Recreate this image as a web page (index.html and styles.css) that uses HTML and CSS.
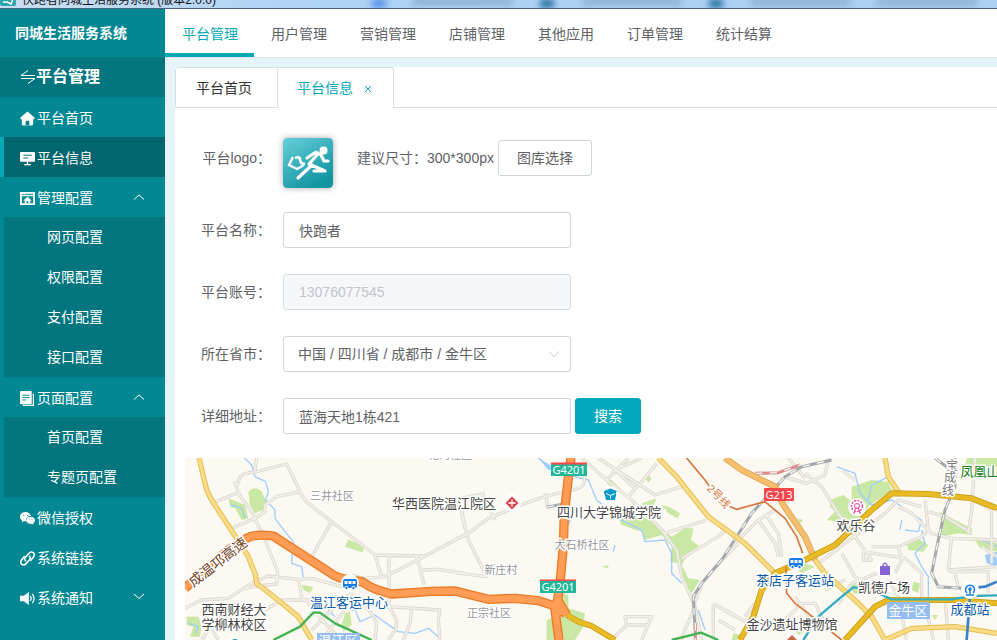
FILE: index.html
```html
<!DOCTYPE html>
<html lang="zh-CN">
<head>
<meta charset="utf-8">
<meta name="viewport" content="width=device-width, initial-scale=1">
<title>同城生活服务系统</title>
<link rel="stylesheet" href="styles.css">
</head>
<body>
<div class="window">
  <header class="titlebar">
    <svg class="titlebar-icon" viewBox="0 0 16 16"><rect width="16" height="16" rx="2" fill="#2aa5ae"/><path d="M3 12h4l4 2 2-5" fill="none" stroke="#fff" stroke-width="1.5"/></svg>
    <span class="titlebar-text">快跑者同城生活服务系统 (版本2.0.0)</span>
    <span class="smudges"><i class="smudge blue"></i><i class="smudge wide"></i><i class="smudge dark"></i><i class="smudge wide"></i><i class="smudge dark"></i><i class="smudge wide"></i><i class="smudge wide"></i></span>
  </header>
  <div class="app">
    <aside class="sidebar">
      <h1 class="brand">同城生活服务系统</h1>
      <h2 class="section"><svg class="swap" viewBox="0 0 16 16"><path d="M1 6.500h14M1 6.500L8 1.500M15 9.500H1M15 9.500L8 14.500"/></svg>平台管理</h2>
      <nav class="menu">
        <a class="item" href="#"><svg class="ico" viewBox="0 0 16 16"><path fill="#fff" d="M8 .5L.5 7Q0 9 2 9v4.500Q2 15.500 4 15.500h8q2 0 2-2V9q2 0 1.500-2z"/><path fill="#038792" d="M6 15.500v-4q0-1 1-1h2q1 0 1 1v4z"/></svg>平台首页</a>
        <a class="item active" href="#"><svg class="ico" viewBox="0 0 16 16"><rect x="0" y="1" width="16" height="10.500" rx="1" fill="#fff"/><path d="M3.500 4.500h9M3.500 7.500h5" stroke="#016a70"/><path d="M8 11v3M4.500 14.500h7" stroke="#fff" stroke-width="1.500"/></svg>平台信息</a>
        <a class="item" href="#"><svg class="ico" viewBox="0 0 16 16"><path fill="#fff" fill-rule="evenodd" d="M0 1h16v14H0zM2 5.500v7.500h12V5.500zM2 3v1h2V3zM5 3v1h9V3z"/><path fill="#fff" d="M8 6L3.500 10H5v3h2v-2h2v2h2v-3h1.500z"/></svg>管理配置<svg class="chev" viewBox="0 0 12 12"><path d="M1 7.500l5-4.500 5 4.500"/></svg></a>
        <div class="submenu"><a href="#">网页配置</a><a href="#">权限配置</a><a href="#">支付配置</a><a href="#">接口配置</a></div>
        <a class="item" href="#"><svg class="ico" viewBox="0 0 16 16"><rect x="0" y="0" width="12.500" height="14" rx="1" fill="#fff"/><path d="M2.500 4.500h7.500M2.500 7h7.500M2.500 9.500h4" stroke="#038792"/><path d="M14.300 3v12.300H3" fill="none" stroke="#fff" stroke-width="1.300"/></svg>页面配置<svg class="chev" viewBox="0 0 12 12"><path d="M1 7.500l5-4.500 5 4.500"/></svg></a>
        <div class="submenu"><a href="#">首页配置</a><a href="#">专题页配置</a></div>
        <a class="item" href="#"><svg class="ico" viewBox="0 0 16 16"><path fill="#fff" d="M6 1C2.600 1 0 3.300 0 6c0 1.700.8 3 2.200 4L1.700 12l2.300-1.200 2.300.2C6 7.500 8.500 5.300 11.800 5.400 11 2.800 8.700 1 6 1z"/><path fill="#fff" d="M11.300 6c-2.700 0-4.700 1.700-4.700 3.900s2 3.900 4.700 3.900l1.500-.2 1.800 1-.4-1.700c1.100-.7 1.800-1.800 1.800-3 0-2.100-2-3.900-4.700-3.900z"/><g fill="#038792"><circle cx="4" cy="4.800" r=".6"/><circle cx="7.800" cy="4.800" r=".6"/><circle cx="9.800" cy="8.800" r=".5"/><circle cx="12.700" cy="8.800" r=".5"/></g></svg>微信授权</a>
        <a class="item" href="#"><svg class="ico" viewBox="0 0 16 16"><g fill="none" stroke="#fff" stroke-width="1.700" stroke-linecap="round"><path d="M6 10.500c-1.300-1-1.300-2.300-.3-3.600L9.500 2.500c3-3.200 7.500 0 5 3.700L11.500 10"/><path d="M10 5.500c1.300 1 1.300 2.300.3 3.600l-3.800 4.400c-3 3.200-7.500 0-5-3.700L4.500 6"/></g></svg>系统链接</a>
        <a class="item" href="#"><svg class="ico" viewBox="0 0 16 16"><path fill="#fff" d="M0 5h4L9.500 1v14L4 11H0z"/><path d="M11 5.500q2 2.500 0 5M13 3q4 5 0 10" fill="none" stroke="#fff" stroke-width="1.300"/></svg>系统通知<svg class="chev" viewBox="0 0 12 12"><path d="M1 2l5 4.500L11 2"/></svg></a>
      </nav>
    </aside>
    <main class="main">
      <nav class="topnav"><a class="current" href="#">平台管理</a><a href="#">用户管理</a><a href="#">营销管理</a><a href="#">店铺管理</a><a href="#">其他应用</a><a href="#">订单管理</a><a href="#">统计结算</a></nav>
      <div class="panel">
        <div class="tabs"><a class="tab" href="#">平台首页</a><a class="tab on" href="#">平台信息<svg class="close" viewBox="0 0 8 8"><path d="M1 1l6 6M7 1L1 7"/></svg></a><span class="rest"></span></div>
        <form class="form">
          <div class="row logo-row"><span class="label">平台logo：</span>
            <svg class="logo" viewBox="0 0 50 50"><defs><linearGradient id="lg" x2=".6" y2="1"><stop stop-color="#65cfdb"/><stop offset="1" stop-color="#1394a1"/></linearGradient></defs><rect width="50" height="50" rx="4" fill="url(#lg)"/><g fill="none" stroke="#fff"><circle cx="40.500" cy="12.500" r="4" fill="#fff" stroke="none"/><path stroke-width="3.200" stroke-linecap="round" stroke-linejoin="round" d="M24 20l9-6 5 3 3 6h4M34 17l-8 9 16 7H31M29 27L15 40"/><path stroke-width="2.400" d="M18 21l-3-2-3 1M10 19l-4 8 8 4 7-4M16 19l2 6 4 1"/></g></svg>
            <span class="hint">建议尺寸：300*300px</span><button class="btn" type="button">图库选择</button></div>
          <div class="row"><label class="label" for="name">平台名称：</label><input class="field" id="name" type="text" value="快跑者"></div>
          <div class="row"><label class="label" for="account">平台账号：</label><input class="field" id="account" type="text" value="13076077545" disabled></div>
          <div class="row"><label class="label" for="region">所在省市：</label><span class="select"><select class="field" id="region"><option>中国 / 四川省 / 成都市 / 金牛区</option></select><svg class="arrow" viewBox="0 0 12 12"><path d="M1 3.500l5 5 5-5"/></svg></span></div>
          <div class="row"><label class="label" for="address">详细地址：</label><input class="field" id="address" type="text" value="蓝海天地1栋421"><button class="btn primary" type="button">搜索</button></div>
        </form>
        <div class="map">
<svg class="map-canvas" role="img" aria-label="地图">
<defs>
<g id="minor">
<path d="M145 97L158 103 165 80Q178 68 210 66L305 42 345 125Q360 155 380 168L440 215 570 315 720 318M215 24L210 60M345 125L275 140 240 165 240 185 210 205 140 235M88 157L165 125M150 95L160 130 200 185 240 270 278 365 275 402 220 408 180 415M440 215L380 320M570 315L590 380M840 255L720 318 600 380 540 385 500 375M695 318L718 405M712 360L760 358 840 370M612 318L612 470 635 510 632 540 610 570M610 470L765 480 760 510 765 570M680 478L675 520 655 570M0 475L50 450 130 445 200 400 250 378 340 388 380 385 490 415M340 388L350 440 380 470M240 480L290 450 380 450M380 540L470 450 500 430M410 570L480 480 520 440M500 430L560 490 575 520 570 570M470 570L400 500M830 180L840 235M50 570L90 510 160 500M100 570L60 500"/>
<path transform="translate(810)" d="M0 270L40 250 100 205 210 160 270 140 350 120Q385 115 388 95L390 50M20 190L40 270 95 380 0 368M80 130L120 210M20 145L90 130M272 130L278 172M380 24L455 90 530 150 620 240 665 300 680 380 720 470 740 570M455 90L520 24M515 145L560 95 605 40M430 24L600 135 680 110M480 60L560 24M540 115L470 50M630 250L755 210M680 325L790 260 820 235M715 470L740 400 800 330 850 280M720 470L690 540 680 570M775 460L840 500M775 460L775 570M790 510L840 540M560 570L590 500 510 500 515 525 470 570M520 525L580 525"/>
<path transform="translate(1620)" d="M30 280L100 210 150 180M100 210L150 280 160 320M120 190L160 250 170 320M175 80L245 100 300 75 310 24M240 70L290 110 340 190 440 330 415 330 415 305 540 325 590 370 590 440M245 100L210 90M190 24L240 85M350 60L390 90M440 290L520 290 590 260 610 240 600 150M590 170L520 150 480 190 400 250 280 340M520 170L560 190 620 250 680 265 816 270M610 185L660 200 740 250M730 250L740 180 750 24M745 150L800 180 800 340M770 290L816 320M680 260L670 360 816 350M670 365L790 365 790 430M520 290L530 330 510 370M490 390L520 440 545 570M350 310L390 380 440 410M480 360L380 400 340 460M300 520L270 460 230 460 150 540M210 440L260 510M0 480L70 520M90 460L60 500M660 440L670 570M700 410L690 370M600 460L625 570M360 390L300 420"/>
</g>
<g id="highway"><path d="M0 415L60 360 130 300 185 265Q210 250 265 258L430 365Q460 388 490 388L530 395Q570 422 620 432L740 424 810 423 910 448 990 445 1060 452 1115 470M1158 24L1148 100 1138 190 1135 290 1125 400 1118 450 1110 480 1122 570M1118 450L1145 495M1110 490L1145 480"/></g>
<g id="yellow"><path d="M42 24L65 120 80 150 145 250 190 320 210 370 215 400 260 435 340 500 380 570M1420 24L1475 80 1510 125 1570 200 1680 280 1770 370M1890 330L1920 370 2020 460 2060 500 2100 570M2100 24L2110 80 2140 125M2100 570L2180 535 2310 530 2436 550"/></g>
<g id="amber"><path d="M1620 24L1670 60 1770 110 1795 165 1860 260 1890 330"/></g>
<g id="gold"><path d="M1665 570L1705 500 1730 420 1770 370 1860 330 1950 285 2020 220 2060 180 2120 130 2230 132 2360 145 2436 175M1980 570L2070 470 2110 450 2310 450 2436 460M1145 495L1180 515 1220 528 1290 570"/></g>
<g id="rail"><path d="M1530 540L1525 440 1550 400 1610 330 1700 190 1800 80 1850 50 1940 30M2310 24L2310 110 2280 180 2260 270 2240 370 2260 410 2330 415M2250 24L2310 70M1085 172L1155 158"/></g>
</defs>
<g class="roads" transform="scale(.33333) translate(0 -24)">
<g class="park">
<path d="M190 125Q210 105 230 125L245 155 235 180 210 190 195 165zM130 145L180 165 190 205 170 210 150 175 135 170zM490 268L515 280 535 290 535 308 510 300 480 290zM5 500L40 500 50 530 45 560 15 560 25 530 5 525zM480 490L495 485 500 525 475 545 470 525zM350 405L385 410 375 430 355 420z"/>
<path transform="translate(810)" d="M445 85L470 90 500 120 480 130zM490 205L545 190 570 175 560 160 605 145 590 180 605 195 560 200 600 215 650 260 690 235 715 235 708 270 735 290 695 320 680 345 700 385 735 390 710 430 690 400 670 340 645 335 650 290 620 255 570 270 560 245 500 225zM620 165L645 172 675 190 668 205 640 190zM570 85L580 75 590 85 580 98zM440 350L460 345 460 355zM320 430L340 435 340 475 390 490 385 530 360 570 275 570 275 510 300 500 320 470z"/>
<path transform="translate(1620)" d="M315 150L355 135 380 155 380 110 440 90 490 95 500 120 430 170 415 210 340 215 305 210 330 185 315 170zM725 24L816 24 816 70 760 70 720 50zM645 185L690 210 740 235 740 255 700 250 650 260zM745 260L816 280 816 305 765 295zM545 275L580 265 610 285 595 305 550 300zM200 350L240 340 270 350 230 370zM215 205L235 210 225 220zM375 400L400 405 405 435 385 430zM565 395L585 400 580 430 560 420zM25 550L45 555 35 570 20 570zM65 480L90 485 70 490zM205 530L240 545 220 555zM620 495L640 495 630 510z"/>
</g>
<g class="water"><path d="M178 24L200 45 210 80 242 95 250 125 242 150 270 180 270 205 300 245 325 275 320 340 350 350 355 385M140 165L170 175 180 205M490 480L510 480 525 515 570 495 590 510 640 545 690 550 730 535 760 560M10 520L40 530 30 550M430 480L450 500"/><path transform="translate(810)" d="M250 24L300 65 400 90 425 150 490 205 560 240 570 275 630 270 650 310 650 370 680 400M730 480L750 540M345 210L340 225M475 305L480 285"/><path transform="translate(1620)" d="M335 50L390 70 405 130 440 165 500 150 530 170M490 80L440 105 430 150M560 190L590 210 580 245 540 240M590 240L600 280 570 310 590 350 610 380 610 480M530 210L525 240M765 270L816 290"/><path class="lake" d="M2400 315L2436 305V350L2405 340zM1060 24L1100 48 1110 58 1090 60z"/></g>
<use href="#minor" class="minor-edge"/><use href="#minor" class="minor-fill"/>
<use href="#rail" class="rail-edge"/><use href="#rail" class="rail-dash"/>
<path class="rail-pink" d="M1710 70L1780 68 1845 45"/><path class="rail-dash" d="M1710 70L1780 68 1845 45"/><path class="rail-pink" d="M1531 520V570"/><path class="rail-dash" d="M1531 520V570"/>
<use href="#yellow" class="yellow-edge"/><use href="#yellow" class="yellow-fill"/>
<use href="#amber" class="amber-edge"/><use href="#amber" class="amber-fill"/>
<use href="#gold" class="gold-edge"/><use href="#gold" class="gold-fill"/>
<use href="#highway" class="hw-edge"/><use href="#highway" class="hw-fill"/>
<path class="line brown" d="M1505 24L1560 90 1610 160 1655 178 1740 155 1800 205 1835 260 1853 310M1803 350L1805 430 1830 460 1870 490 1970 570"/>
<path class="line green" d="M265 570L345 530 385 488 405 488 450 520 560 570M1460 570L1548 548 1600 570"/>
<path class="line teal" d="M1855 570L1900 500 1970 440 2005 412 2050 415 2120 448 2300 448 2360 438 2436 436"/>
<path class="line blue" d="M2355 440L2345 570M2355 415L2400 410 2436 395"/>
</g>
<g class="badges">
<g class="road-label"><rect x="366" y="5" width="36" height="13" fill="#20b79a"/><path d="M366 5.500h36M355 122.500h36" stroke="#f5484d" stroke-width="2"/><rect x="355" y="123" width="36" height="12" fill="#20b79a"/><rect x="579" y="30" width="30" height="13" rx="1" fill="#f4484c"/><text x="384" y="16">G4201</text><text x="373" y="133">G4201</text><text x="594" y="41">G213</text></g>
<rect x="132" y="175" width="43" height="20" fill="#96bdf0"/><rect x="702" y="144" width="43" height="17" fill="#96bdf0"/>
<g class="district"><text x="153" y="187">温江区</text><text x="723" y="157">金牛区</text></g>
</g>
<g class="pins">
<g fill="#fff"><circle cx="165" cy="125" r="9"/><circle cx="327" cy="45" r="9"/><circle cx="425" cy="37" r="9"/><circle cx="611" cy="104" r="9"/><circle cx="672" cy="49" r="9"/><circle cx="700" cy="111" r="9"/><circle cx="785" cy="132" r="9"/><circle cx="50" cy="186" r="8"/><circle cx="607" cy="184" r="8"/></g>
<g id="bus" fill="#157be6"><rect x="158" y="121" width="14" height="9" rx="2"/><path d="M159.500 123h3v3h-3zM163.500 123h3v3h-3zM167.500 123h3v3h-3z" fill="#fff"/><g stroke="#fff"><circle cx="161.500" cy="130" r="1.700"/><circle cx="168.500" cy="130" r="1.700"/></g></g>
<use href="#bus" x="446" y="-21"/>
<path d="M327 38.500l6.500 6.500-6.500 6.500-6.500-6.500z" fill="#dc4149"/><path d="M327 41.500v7M323.500 45h7" stroke="#fff" stroke-width="1.300"/>
<path d="M419 33l6.500-2.500 6.500 2.500-1 1.500v3l-1 4.500h-9l-1-5-1-2z" fill="#0899cc"/><path d="M421 35.500l4.500 2 4.500-2M425.500 37.500v3" stroke="#fff" fill="none"/>
<g stroke="#ed4998" fill="none"><circle cx="672" cy="48" r="5.500" stroke-width="1.500" stroke-dasharray="2 1.200"/><circle cx="672" cy="48" r="2.500"/><path d="M671 49l-2 6M673 49l2 6M668 55h2M674 55h2"/></g>
<path d="M695 108h10v9h-10z" fill="#8762d3"/><path d="M698 109v-2q2-3.500 4 0v2" fill="none" stroke="#8762d3" stroke-width="1.300"/>
<g fill="none" stroke="#157be6" stroke-width="1.500"><path d="M782 135a4.500 4.500 0 1 1 6 0M785 131v5M781 137h8"/><circle cx="785" cy="131" r="1"/></g>
<circle cx="50" cy="186" r="5" fill="#0899cc"/><path d="M601 183l6-6 6 6z" fill="#c66a3b"/>
</g>
<g class="labels">
<g class="small"><text x="265" y="1">花湾社区</text><text x="147" y="42">三井社区</text><text x="397" y="91">大石桥社区</text><text x="316" y="116">新庄村</text><text x="304" y="159">正宗社区</text></g>
<g class="place"><text x="259" y="50">华西医院温江院区</text><text x="424" y="59">四川大学锦城学院</text><text x="671" y="72">欢乐谷</text><text x="699" y="134">凯德广场</text><text x="607" y="171">金沙遗址博物馆</text><text x="49" y="156">西南财经大</text><text x="49" y="171">学柳林校区</text></g>
<g class="station"><text x="164" y="149">温江客运中心</text><text x="610" y="127">茶店子客运站</text><text x="785" y="156">成都站</text></g>
<text class="nature" x="795" y="18">凤凰山</text>
<g class="railway"><text x="767" y="12">宝</text><text x="765" y="24">成</text><text x="763" y="37">线</text></g>
<text class="road-name" transform="translate(36 108) rotate(-38)">成温邛高速</text>
<text class="metro" transform="translate(531 41) rotate(46)">2号线</text>
</g>
</svg>
        </div>
      </div>
    </main>
  </div>
</div>
</body>
</html>
```
FILE: styles.css
```css
* { box-sizing: border-box; }
body { margin: 0; color: #606266; font: 14px/20px "Liberation Sans", "Noto Sans CJK SC", sans-serif; }
a { color: inherit; text-decoration: none; }
svg { display: block; flex: none; }
.window { display: flex; flex-direction: column; height: 100vh; overflow: hidden; }
.titlebar { display: flex; flex: none; align-items: flex-end; gap: 6px; height: 9px; overflow: hidden; background: linear-gradient(90deg, #c8def3, #aed1f6 35%, #abcff5); border-bottom: 1px solid #47637f; }
.titlebar-icon { width: 16px; height: 16px; margin-bottom: 2px; }
.titlebar-text { color: #111; font-size: 12px; line-height: 16px; white-space: nowrap; }
.smudges { display: flex; flex: 1; justify-content: space-between; padding: 0 20px 0 150px; }
.smudge { width: 14px; height: 9px; filter: blur(3px); }
.smudge.blue { background: #5794e8; }
.smudge.dark { background: #2d759f; }
.smudge.wide { width: 100px; height: 6px; background: #88aace; }
.app { display: flex; flex: 1; min-height: 0; }
.sidebar { flex: none; width: 165px; background: #038792; color: #fff; }
.brand { margin: 0; padding-left: 15px; font-size: 14px; line-height: 48px; }
.section { display: flex; align-items: center; height: 40px; margin: 0; padding-left: 20px; background: #03757f; font-size: 16px; }
.swap { width: 16px; height: 16px; fill: none; stroke: #fff; }
.item { display: flex; align-items: center; gap: 2px; height: 40px; padding: 2px 20px 0 16px; border-left: 4px solid transparent; }
.item.active { background: #01666d; border-left-color: #04a9b8; }
.ico { width: 15px; height: 15px; }
.chev { width: 12px; height: 12px; margin-left: auto; fill: none; stroke: #fff; }
.submenu { display: flex; flex-direction: column; margin-left: 4px; padding-left: 43px; background: #03757f; line-height: 40px; }
.main { display: flex; flex: 1; flex-direction: column; min-width: 0; background: #e5f4f8; }
.topnav { display: flex; flex: none; height: 49px; background: #fff; border-bottom: 1px solid #dde6e7; }
.topnav a { padding: 0 16px 0 17px; line-height: 50px; white-space: nowrap; }
.topnav .current { color: #04a9b8; border-bottom: 4px solid #04a9b8; }
.panel { display: flex; flex: 1; flex-direction: column; min-height: 0; margin: 9px 0 0 10px; background: #fff; }
.tabs { display: flex; flex: none; height: 41px; }
.tab { display: flex; align-items: center; padding: 0 25px 0 20px; border: 1px solid #d3e0df; color: #303133; border-top-left-radius: 3px; }
.tab.on { gap: 11px; padding: 0 21px 0 19px; border-left: 0; border-bottom-color: transparent; border-radius: 0 3px 0 0; color: #04a9b8; }
.close { width: 8px; height: 8px; margin-top: 2px; stroke: #04a9b8; }
.rest { flex: 1; border-bottom: 1px solid #d3e0df; }
.form { display: flex; flex: none; flex-direction: column; gap: 26px; padding: 30px 10px 24px 0; }
.row { display: flex; align-items: center; height: 36px; }
.logo-row { align-items: flex-start; height: 48px; line-height: 40px; }
.logo-row .btn { margin-top: 2px; }
.label { flex: none; width: 108px; padding-right: 12px; text-align: right; white-space: nowrap; }
.logo { width: 50px; height: 50px; margin-right: 24px; border-radius: 4px; box-shadow: 0 0 6px #aaa; }
.hint { margin-right: 4px; white-space: nowrap; }
.btn { height: 36px; padding: 0 18px; border: 1px solid #ccd7d6; border-radius: 3px; background: #fff; color: #606266; font: inherit; line-height: 20px; white-space: nowrap; }
.btn.primary { margin-left: 4px; border-color: #02a9ba; background: #02a9ba; color: #fff; }
.field { appearance: none; width: 288px; height: 36px; margin: 0; padding: 0 15px; border: 1px solid #ccd7d6; border-radius: 3px; background: #fff; color: #606266; font: inherit; opacity: 1; }
.field:disabled { border-color: #d5e0df; background: #f5f7fb; color: #c0c4cc; }
.select { position: relative; }
.select .field { padding-left: 14px; }
.arrow { position: absolute; top: 12px; right: 11px; width: 12px; height: 12px; fill: none; stroke: #c0c4cc; pointer-events: none; }
.map { flex: 1; min-height: 0; margin-left: 10px; overflow: hidden; background: #fcf9f2; }
.map-canvas { width: 100%; height: 100%; }
.roads { fill: none; stroke-linejoin: round; }
.park { fill: #c9e8a4; }
.water { stroke: #9fccff; stroke-width: 4; }
.lake { fill: #9fccff; stroke: none; }
.minor-edge { stroke: #dcd8cf; stroke-width: 10; }
.minor-fill { stroke: #f2efe8; stroke-width: 5; }
.rail-edge { stroke: #a4a9ac; stroke-width: 9; }
.rail-pink { stroke: #dc8c8a; stroke-width: 9; }
.rail-dash { stroke: #f5f5f2; stroke-width: 4; stroke-dasharray: 22 22; }
.yellow-edge { stroke: #e6bf50; stroke-width: 16; }
.yellow-fill { stroke: #f8dc8a; stroke-width: 10; }
.amber-edge { stroke: #dda245; stroke-width: 19; }
.amber-fill { stroke: #f8be70; stroke-width: 14; }
.gold-edge { stroke: #cb9d18; stroke-width: 18; }
.gold-fill { stroke: #e8bb24; stroke-width: 13; }
.hw-edge { stroke: #ed7a24; stroke-width: 28; }
.hw-fill { stroke: #ff9c55; stroke-width: 20; }
.line { stroke-width: 5; }
.brown { stroke: #d6773c; }
.green { stroke: #41b34f; stroke-width: 7; }
.teal { stroke: #33adc4; stroke-width: 7; }
.blue { stroke: #3c80cb; stroke-width: 8; }
.map-canvas text { text-anchor: middle; }
.road-label { fill: #fff; font-family: "Noto Sans", sans-serif; font-size: 11px; }
.district { fill: #fff; font-size: 13px; }
.labels { fill: #444; font-size: 13px; stroke: #fff; stroke-width: 3px; stroke-linejoin: round; paint-order: stroke; }
.small { fill: #969696; font-size: 11px; }
.station { fill: #0759a8; }
.nature { fill: #168016; }
.railway { fill: #777; font-size: 12px; }
.road-name { fill: #70421f; font-size: 14px; }
.metro { fill: #d6773c; font-size: 11px; }
```
